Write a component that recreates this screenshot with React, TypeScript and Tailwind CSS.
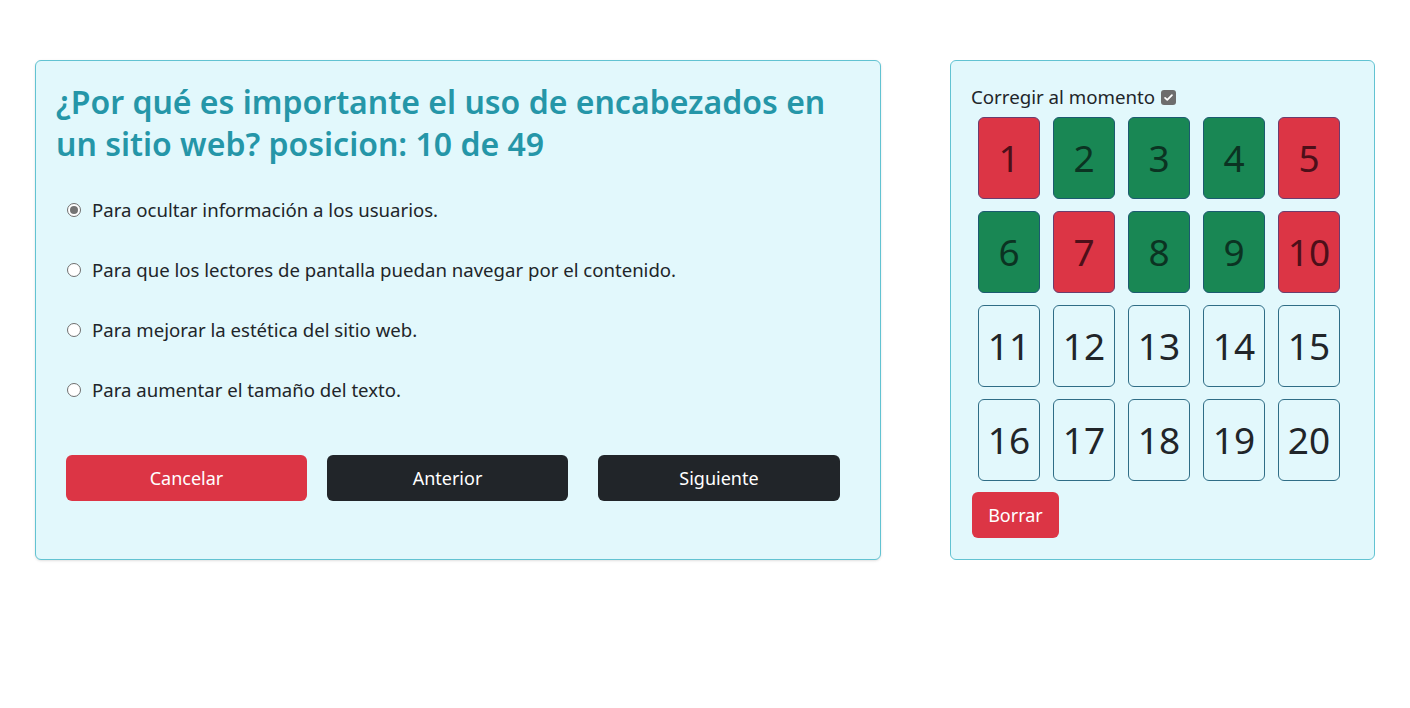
const options = [
  'Para ocultar información a los usuarios.',
  'Para que los lectores de pantalla puedan navegar por el contenido.',
  'Para mejorar la estética del sitio web.',
  'Para aumentar el tamaño del texto.',
];

const status: Record<number, 'ok' | 'bad' | undefined> = {
  1: 'bad',
  2: 'ok',
  3: 'ok',
  4: 'ok',
  5: 'bad',
  6: 'ok',
  7: 'bad',
  8: 'ok',
  9: 'ok',
  10: 'bad',
};

function Radio({ checked }: { checked: boolean }) {
  return (
    <span className="flex h-[14px] w-[14px] shrink-0 items-center justify-center rounded-full border border-[#6f6f6f] bg-white">
      {checked && <span className="h-[8px] w-[8px] rounded-full bg-[#747474]" />}
    </span>
  );
}

function QuestionCard() {
  return (
    <div className="w-[846px] rounded-md border border-[#62c3d2] bg-[#e2f8fc] px-5 pt-5 pb-[58px] shadow-sm">
      <h2 className="text-[32px] leading-[42px] font-semibold text-[#2596a8]">
        ¿Por qué es importante el uso de encabezados en un sitio web? posicion: 10 de 49
      </h2>
      <div className="mt-[33px] flex flex-col gap-9 pl-[11px]">
        {options.map((o, i) => (
          <label key={o} className="flex h-6 items-center gap-[11px] text-[18.6px] text-[#212529]">
            <Radio checked={i === 0} />
            <span>{o}</span>
          </label>
        ))}
      </div>
      <div className="mt-[53px] flex pl-[10px]">
        <button className="h-[46px] w-[241px] rounded-md bg-[#dc3545] text-[18px] text-white">Cancelar</button>
        <button className="ml-[20px] h-[46px] w-[241px] rounded-md bg-[#212529] text-[18px] text-white">Anterior</button>
        <button className="ml-[30px] h-[46px] w-[242px] rounded-md bg-[#212529] text-[18px] text-white">Siguiente</button>
      </div>
    </div>
  );
}

function NavCard() {
  const nums = Array.from({ length: 20 }, (_, i) => i + 1);
  return (
    <div className="h-[500px] flex-1 rounded-md border border-[#62c3d2] bg-[#e2f8fc] px-5 pt-[24px]">
      <div className="flex items-center gap-[6px] text-[18.7px] leading-6 text-[#212529]">
        <span>Corregir al momento</span>
        <span className="flex h-[15px] w-[15px] items-center justify-center rounded-[3px] bg-[#6d6d6d]">
          <svg width="11" height="11" viewBox="0 0 16 16">
            <path d="M3 8.5l3.2 3L13 4.5" fill="none" stroke="white" strokeWidth="2.6" strokeLinecap="round" strokeLinejoin="round" />
          </svg>
        </span>
      </div>
      <div className="mt-[8px] grid w-fit grid-cols-[repeat(5,62px)] gap-x-[13px] gap-y-[12px] pl-[7px]">
        {nums.map((n) => {
          const s = status[n];
          const cls =
            s === 'bad'
              ? 'bg-[#dc3545] text-[#4d0f19] border-[#6a3d6e]'
              : s === 'ok'
                ? 'bg-[#198754] text-[#0b3322] border-[#1c5a70]'
                : 'bg-[#e2f8fc] text-[#212529] border-[#2f6d86]';
          return (
            <button key={n} className={`flex h-[82px] w-[62px] items-center justify-center rounded-md border text-[37px] ${cls}`}>
              {n}
            </button>
          );
        })}
      </div>
      <button className="mt-[11px] ml-px h-[46px] w-[87px] rounded-md bg-[#dc3545] text-[18px] text-white">Borrar</button>
    </div>
  );
}

export default function App() {
  return (
    <div className="min-h-screen bg-white font-['Noto_Sans',sans-serif]">
      <div className="flex gap-[69px] px-[35px] pt-[60px] pr-[35px]">
        <QuestionCard />
        <NavCard />
      </div>
    </div>
  );
}
